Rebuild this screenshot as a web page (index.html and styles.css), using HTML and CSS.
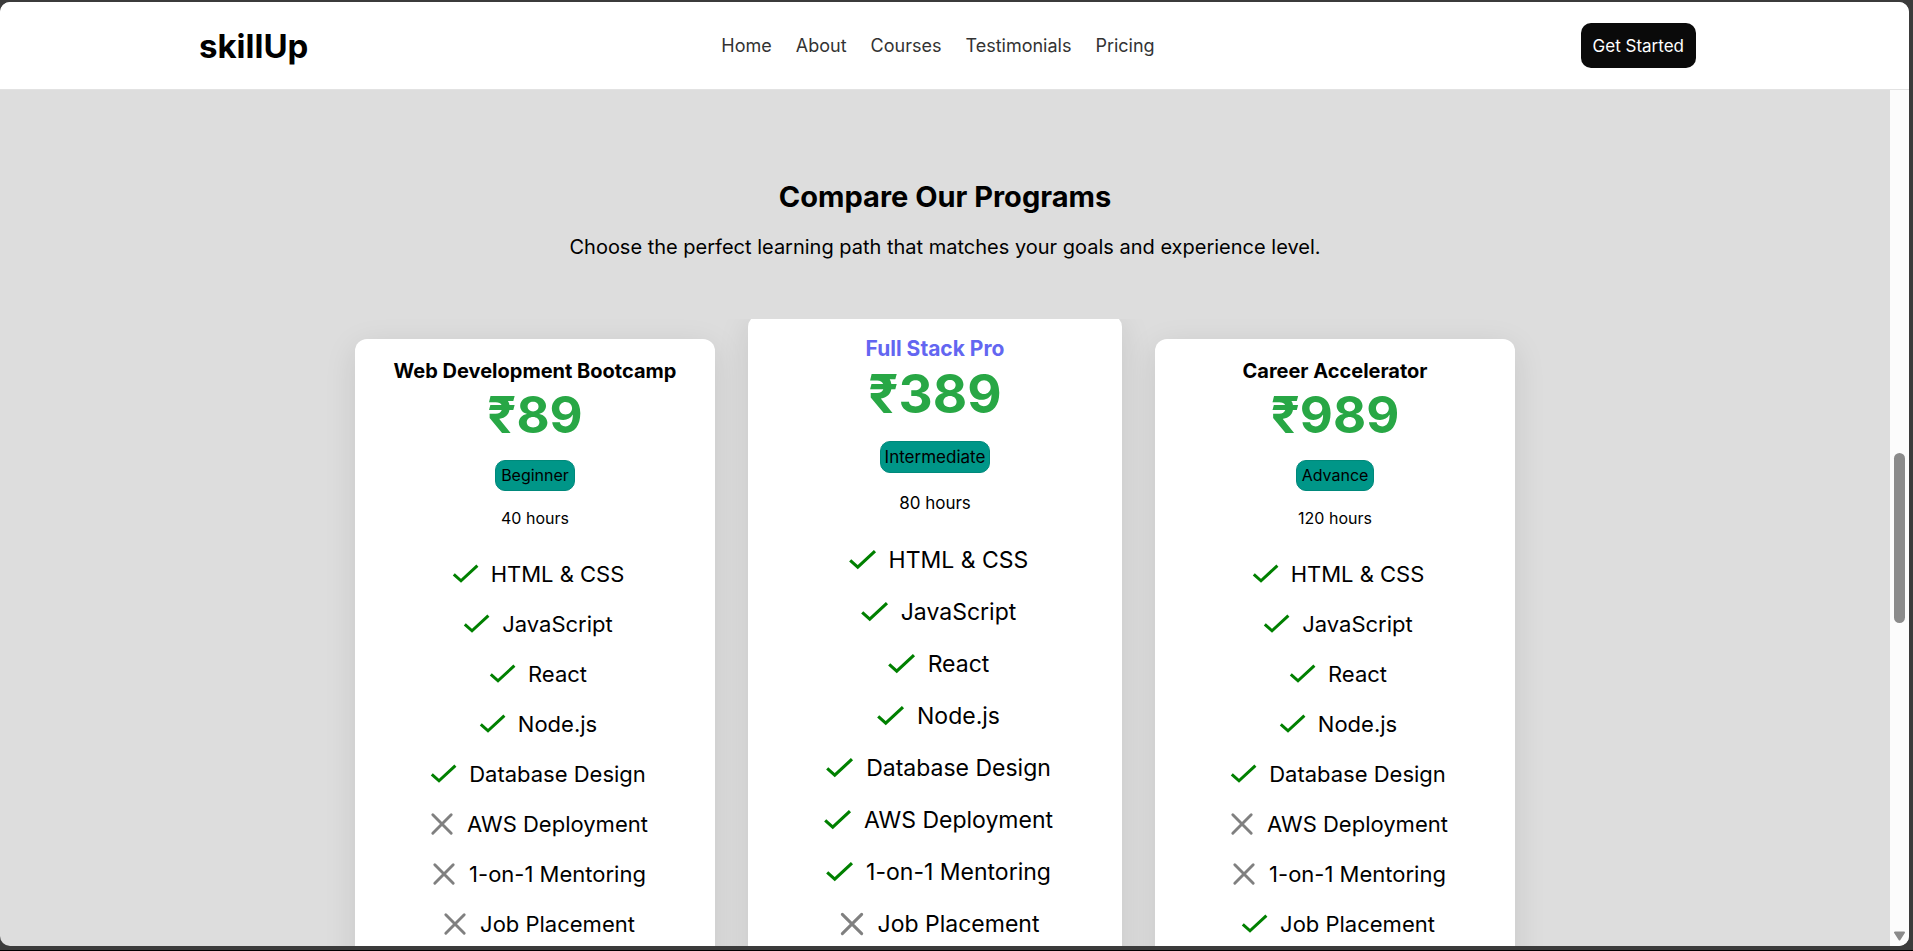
FILE: index.html
```html
<!DOCTYPE html>
<html lang="en">
<head>
<meta charset="utf-8">
<title>skillUp</title>
<meta name="viewport" content="width=device-width, initial-scale=1">
<link rel="stylesheet" href="styles.css">
</head>
<body>
<svg class="sprite" aria-hidden="true">
  <symbol id="check" viewBox="0 0 40 40"><path d="M7.8 20.4L15 26.8L31.4 11.6" fill="none" stroke="currentColor" stroke-width="3"/></symbol>
  <symbol id="cross" viewBox="0 0 40 40"><path d="M10.8 10.8L29.2 29.2M29.2 10.8L10.8 29.2" fill="none" stroke="currentColor" stroke-width="2.9" stroke-linecap="round"/></symbol>
</svg>
<div class="window">
  <header class="header">
    <a class="logo" href="#">skillUp</a>
    <nav class="nav">
      <a href="#">Home</a>
      <a href="#">About</a>
      <a href="#">Courses</a>
      <a href="#">Testimonials</a>
      <a href="#">Pricing</a>
    </nav>
    <button class="cta" type="button">Get Started</button>
  </header>
  <div class="viewport">
    <main class="programs">
      <h2 class="heading">Compare Our Programs</h2>
      <p class="subheading">Choose the perfect learning path that matches your goals and experience level.</p>
      <div class="cards">
        <article class="card">
          <h3 class="card-title">Web Development Bootcamp</h3>
          <p class="price">₹89</p>
          <span class="badge">Beginner</span>
          <p class="hours">40 hours</p>
          <ul class="features">
            <li><svg class="yes"><use href="#check"/></svg>HTML &amp; CSS</li>
            <li><svg class="yes"><use href="#check"/></svg>JavaScript</li>
            <li><svg class="yes"><use href="#check"/></svg>React</li>
            <li><svg class="yes"><use href="#check"/></svg>Node.js</li>
            <li><svg class="yes"><use href="#check"/></svg>Database Design</li>
            <li><svg class="no"><use href="#cross"/></svg>AWS Deployment</li>
            <li><svg class="no"><use href="#cross"/></svg>1-on-1 Mentoring</li>
            <li><svg class="no"><use href="#cross"/></svg>Job Placement</li>
          </ul>
        </article>
        <article class="card featured">
          <h3 class="card-title">Full Stack Pro</h3>
          <p class="price">₹389</p>
          <span class="badge">Intermediate</span>
          <p class="hours">80 hours</p>
          <ul class="features">
            <li><svg class="yes"><use href="#check"/></svg>HTML &amp; CSS</li>
            <li><svg class="yes"><use href="#check"/></svg>JavaScript</li>
            <li><svg class="yes"><use href="#check"/></svg>React</li>
            <li><svg class="yes"><use href="#check"/></svg>Node.js</li>
            <li><svg class="yes"><use href="#check"/></svg>Database Design</li>
            <li><svg class="yes"><use href="#check"/></svg>AWS Deployment</li>
            <li><svg class="yes"><use href="#check"/></svg>1-on-1 Mentoring</li>
            <li><svg class="no"><use href="#cross"/></svg>Job Placement</li>
          </ul>
        </article>
        <article class="card">
          <h3 class="card-title">Career Accelerator</h3>
          <p class="price">₹989</p>
          <span class="badge">Advance</span>
          <p class="hours">120 hours</p>
          <ul class="features">
            <li><svg class="yes"><use href="#check"/></svg>HTML &amp; CSS</li>
            <li><svg class="yes"><use href="#check"/></svg>JavaScript</li>
            <li><svg class="yes"><use href="#check"/></svg>React</li>
            <li><svg class="yes"><use href="#check"/></svg>Node.js</li>
            <li><svg class="yes"><use href="#check"/></svg>Database Design</li>
            <li><svg class="no"><use href="#cross"/></svg>AWS Deployment</li>
            <li><svg class="no"><use href="#cross"/></svg>1-on-1 Mentoring</li>
            <li><svg class="yes"><use href="#check"/></svg>Job Placement</li>
          </ul>
        </article>
      </div>
    </main>
    <div class="scrollbar" aria-hidden="true">
      <div class="thumb"></div>
      <svg class="arrow" viewBox="0 0 13 10"><path d="M2 1.5h9L6.5 8.5z" fill="#8b8b8b" stroke="#8b8b8b" stroke-width="2" stroke-linejoin="round"/></svg>
    </div>
  </div>
</div>
</body>
</html>
```
FILE: styles.css
```css
* {
  box-sizing: border-box;
  margin: 0;
  padding: 0;
}

body {
  height: 100vh;
  padding: 2px 4px 4px 0;
  border-bottom: 1px solid #000;
  background: #3b3b3b;
  color: #000;
  font-family: Inter, "Liberation Sans", sans-serif;
  font-size: 16px;
  overflow: hidden;
}

.sprite {
  position: absolute;
  width: 0;
  height: 0;
}

.window {
  display: flex;
  flex-direction: column;
  height: 100%;
  border-radius: 10px;
  background: #ddd;
  overflow: hidden;
}

.header {
  display: flex;
  flex: none;
  align-items: center;
  justify-content: space-between;
  height: 88px;
  padding: 0 213px 0 199px;
  border-bottom: 1px solid #e2e2e2;
  background: #fff;
}

.logo {
  color: #000;
  font-size: 33px;
  font-weight: 700;
  text-decoration: none;
}

.nav {
  display: flex;
  gap: 24px;
  padding-right: 13px;
}

.nav a {
  color: #333;
  font-size: 18px;
  text-decoration: none;
}

.cta {
  height: 45px;
  padding: 0 12px;
  border: 0;
  border-radius: 10px;
  background: #0a0a0a;
  color: #fff;
  font-family: inherit;
  font-size: 17px;
}

.viewport {
  display: flex;
  flex: 1;
  min-height: 0;
}

.programs {
  flex: 1;
  padding-top: 89px;
  overflow: hidden;
  text-align: center;
}

.heading {
  font-size: 29px;
  font-weight: 700;
  line-height: 36px;
}

.subheading {
  margin: 20px 0 60px;
  font-size: 20px;
  line-height: 24px;
}

.cards {
  display: flex;
  align-items: flex-start;
  justify-content: center;
  gap: 40px;
  padding: 20px 20px 20px 0;
  overflow: hidden;
}

.card {
  flex: none;
  width: 360px;
  padding: 20px 20px 40px;
  border-radius: 12px;
  background: #fff;
  box-shadow: 0 8px 32px rgba(0, 0, 0, 0.1);
}

.card-title {
  font-size: 20px;
  font-weight: 700;
  line-height: 24px;
}

.price {
  color: #28a745;
  font-size: 51px;
  font-weight: 700;
  line-height: 64px;
}

.badge {
  display: inline-block;
  margin-top: 13px;
  padding: 0 5px;
  border: 1px solid #00897b;
  border-radius: 10px;
  background: #009688;
  font-size: 16px;
  line-height: 29px;
  vertical-align: top;
}

.hours {
  margin-top: 17px;
  font-size: 16px;
  line-height: 20px;
}

.features {
  margin-top: 21px;
  font-size: 22px;
  list-style: none;
}

.features li {
  display: flex;
  align-items: center;
  justify-content: center;
  gap: 5px;
  height: 50px;
}

.features svg {
  width: 40px;
  height: 40px;
}

.yes {
  color: #008000;
}

.no {
  color: #808080;
}

.featured {
  position: relative;
  width: 374px;
  margin: -24px -7px 0;
  padding-top: 21px;
}

.featured .card-title {
  color: #6366f1;
  font-size: 21px;
  line-height: 25px;
}

.featured .price {
  font-size: 53px;
  line-height: 67px;
}

.featured .badge {
  padding: 0 4px;
  font-size: 17px;
  line-height: 30px;
}

.featured .hours {
  margin-top: 20px;
  font-size: 17px;
}

.featured .features {
  font-size: 23px;
}

.featured li {
  height: 52px;
}

.featured svg {
  width: 42px;
  height: 42px;
}

.scrollbar {
  display: flex;
  flex: none;
  flex-direction: column;
  align-items: center;
  justify-content: space-between;
  width: 19px;
  padding: 363px 0 5px;
  background: #fcfcfc;
}

.thumb {
  width: 11px;
  height: 170px;
  border-radius: 6px;
  background: #8b8b8b;
}

.arrow {
  width: 13px;
  height: 10px;
}
```
